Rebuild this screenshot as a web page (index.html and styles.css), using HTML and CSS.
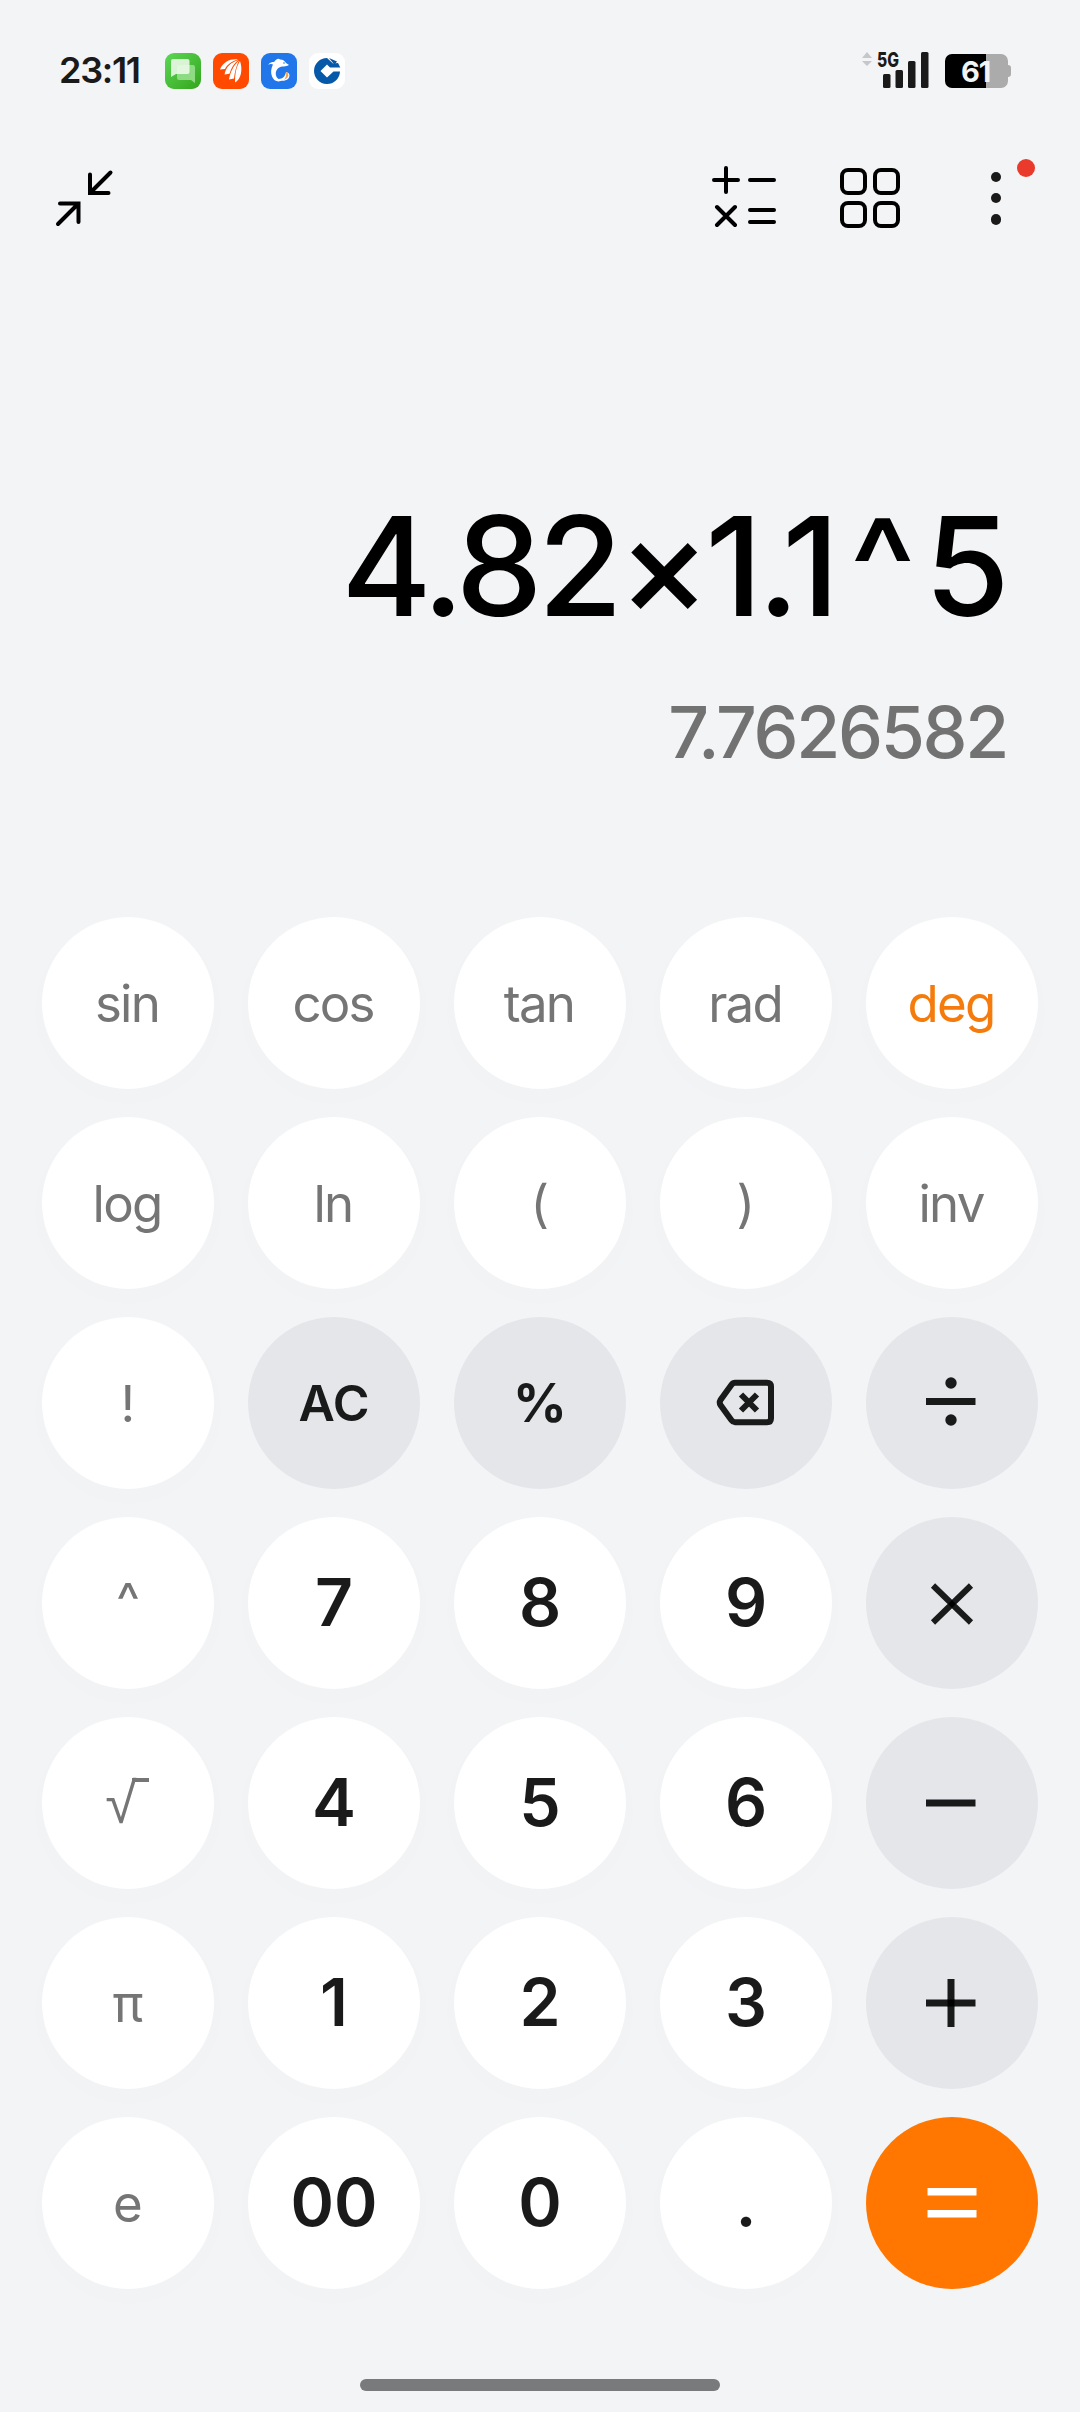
FILE: index.html
```html
<!DOCTYPE html>
<html>
<head>
    <meta charset="utf-8" />
    <title>Calculator</title>
    <link rel="stylesheet" href="styles.css">
</head>
<body>
    <div class="status_bar">
        <span class="time">23:11</span>
        <div class="notifications">
            <svg class="app" viewBox="0 0 36 36">
                <defs>
                    <linearGradient id="green" x1="0" y1="0" x2="1" y2="1">
                        <stop offset="0" stop-color="#5cd756" />
                        <stop offset="1" stop-color="#34a51c" />
                    </linearGradient>
                </defs>
                <rect width="36" height="36" rx="9" fill="url(#green)" />
                <path d="M14 12h14a2 2 0 0 1 2 2v16l-4-3H14a2 2 0 0 1-2-2V14a2 2 0 0 1 2-2z" fill="#8fdb83" />
                <path d="M8 6h14.500a2 2 0 0 1 2 2v11a2 2 0 0 1-2 2H11l-5 3V8a2 2 0 0 1 2-2z" fill="#f2fbef" opacity=".85" />
            </svg>
            <svg class="app" viewBox="0 0 36 36">
                <rect width="36" height="36" rx="9" fill="#ff4a00" />
                <path d="M25 6.500C18 5.500 10 8.500 7 16.500l5-.5C14 12 18 8.500 25 6.500z" fill="#fff" />
                <path d="M25.500 7C18 9.500 13 13.500 11.500 21.500l5-.8C18 15 21 10.500 25.500 7z" fill="#fff" />
                <path d="M26 7.500C20.500 12.500 17.500 18.500 16 26.500l5-1C21.500 19 23.500 12.500 26 7.500z" fill="#fff" />
                <path d="M27 8c-4 6.500-5 12.500-5 21.500 6-3 8-13 5-21.500z" fill="#fff" />
            </svg>
            <svg class="app" viewBox="0 0 36 36">
                <rect width="36" height="36" rx="9" fill="#2176ea" />
                <path d="M7 12c2-3 4-3 6-3 3-4 5-3.500 6-2.500 3 .2 5 1.500 6 3.500l3 2c-2 1.500-5 1.500-7 1.500-5 1-7 5-6 9 1 3.500 4 4.500 7 4-4 3.500-9 2-11-3-1.500-4-1-8 1-12-2-1-3-.500-5 .5z" fill="#fff" />
                <path d="M14 25c5 2.500 10 0 11-6 4 1 4.500 4 2 7-3 2.500-9 2.500-13-1z" fill="#fff" />
                <path d="M25 19c3 1 3 4 1 6l-3 2c2-3 2.500-5 2-8z" fill="#f3a24c" />
                <circle cx="23" cy="10" r=".8" fill="#2176ea" />
            </svg>
            <svg class="app" viewBox="0 0 36 36">
                <rect width="36" height="36" rx="9" fill="#fff" />
                <path d="M18 5a13 13 0 1 0 13 13.500h-6.500L18 24.500 11.500 18 18 11.500l3 3h10.300l-2.300-4.500-5 .5L18 5z" fill="#0659a9" />
                <path d="M20 5l8 3.500-2.500 3.200z" fill="#0659a9" />
            </svg>
        </div>
        <div class="status_right">
            <svg class="signal" viewBox="0 0 68 38">
                <path d="M0 8l5-6 5 6zM0 11l5 5 5-5z" fill="#c6c7c9" />
                <text class="network" x="15" y="17" textLength="22" lengthAdjust="spacingAndGlyphs">5G</text>
                <g fill="#1a1a1a">
                    <rect x="21" y="24" width="7.500" height="14" rx="1.500" />
                    <rect x="33.500" y="20" width="7.500" height="18" rx="1.500" />
                    <rect x="46" y="11" width="7.500" height="27" rx="1.500" />
                    <rect x="59" y="2" width="7.500" height="36" rx="1.500" />
                </g>
            </svg>
            <svg class="battery" viewBox="0 0 66 34">
                <path d="M41 0h15a7 7 0 0 1 7 7v4q3 0 3 3v6q0 3-3 3v4a7 7 0 0 1-7 7H41z" fill="#ababab" />
                <path d="M7 0h34v34H7a7 7 0 0 1-7-7V7a7 7 0 0 1 7-7z" fill="#000" />
                <text class="percent" x="16" y="28">61</text>
            </svg>
        </div>
    </div>

    <div class="toolbar">
        <svg class="collapse" viewBox="0 0 58 58">
            <path d="M55.500 3.500L35 24M35 5.500V24h18.500M3 55l20.500-20.500M5 34.500h18.500V53" />
        </svg>
        <svg class="convert" viewBox="0 0 68 64">
            <path d="M2 14h24M14 2v24M38 14h24M5 41l18 18M23 41L5 59M38 44h24M38 56h24" />
        </svg>
        <svg class="grid" viewBox="0 0 60 60">
            <rect x="2" y="2" width="23" height="23" rx="6" />
            <rect x="35" y="2" width="23" height="23" rx="6" />
            <rect x="2" y="35" width="23" height="23" rx="6" />
            <rect x="35" y="35" width="23" height="23" rx="6" />
        </svg>
        <div class="more">
            <i></i><i></i><i></i>
            <span class="badge"></span>
        </div>
    </div>

    <div class="display">
        <div class="expression">4.82×1.1<span class="pow">^</span>5</div>
        <div class="result">7.7626582</div>
    </div>

    <div class="keys">
        <button class="fn">sin</button>
        <button class="fn">cos</button>
        <button class="fn">tan</button>
        <button class="fn">rad</button>
        <button class="fn active">deg</button>

        <button class="fn">log</button>
        <button class="fn">ln</button>
        <button class="fn">(</button>
        <button class="fn">)</button>
        <button class="fn">inv</button>

        <button class="fn">!</button>
        <button class="op">AC</button>
        <button class="op percent_key">%</button>
        <button class="op">
            <svg viewBox="0 0 172 172">
                <path d="M75 65.800h32q4 0 4 4v31.400q0 4-4 4H75q-2 0-3.500-2L60.500 88q-1.500-2.500 0-5L71.500 67.800q1.500-2 3.500-2z" class="line" />
                <path d="M81 77.500l16 16M97 77.500l-16 16" class="line" />
            </svg>
        </button>
        <button class="op">
            <svg viewBox="0 0 172 172">
                <rect x="60" y="81" width="49.500" height="7" />
                <circle cx="85" cy="66" r="5.700" />
                <circle cx="85" cy="103" r="5.700" />
            </svg>
        </button>

        <button class="fn power_key">^</button>
        <button class="num">7</button>
        <button class="num">8</button>
        <button class="num">9</button>
        <button class="op">
            <svg viewBox="0 0 172 172">
                <path d="M67 68.500l38 37M105 68.500l-38 37" class="line" />
                <path d="M86 83l4 4-4 4-4-4z" class="cross" />
            </svg>
        </button>

        <button class="fn root">√<span class="root_bar"></span></button>
        <button class="num">4</button>
        <button class="num">5</button>
        <button class="num">6</button>
        <button class="op">
            <svg viewBox="0 0 172 172">
                <rect x="60" y="82.500" width="49.500" height="7" />
            </svg>
        </button>

        <button class="fn">π</button>
        <button class="num">1</button>
        <button class="num">2</button>
        <button class="num">3</button>
        <button class="op">
            <svg viewBox="0 0 172 172">
                <rect x="60" y="82.500" width="49.500" height="7" />
                <rect x="81.500" y="62" width="7" height="48" />
                <rect x="81.500" y="82.500" width="7" height="7" class="cross" />
            </svg>
        </button>

        <button class="fn">e</button>
        <button class="num">00</button>
        <button class="num">0</button>
        <button class="num">.</button>
        <button class="op equal">
            <svg viewBox="0 0 172 172">
                <rect x="61.500" y="71" width="49" height="7.500" />
                <rect x="61.500" y="93" width="49" height="7.500" />
            </svg>
        </button>
    </div>

    <div class="home_bar"></div>
</body>
</html>
```
FILE: styles.css
```css
* {
    box-sizing: border-box;
    font-family: Inter, Roboto, sans-serif;
}

body {
    margin: 0;
    width: 1080px;
    height: 2412px;
    background-color: #f3f4f6;
    display: flex;
    flex-direction: column;
    overflow: hidden;
}

svg {
    display: block;
    overflow: visible;
}

.status_bar {
    height: 142px;
    padding: 0 69px 0 59px;
    display: flex;
    align-items: center;
}

.time {
    width: 106px;
    padding-bottom: 3px;
    font-size: 36px;
    font-weight: 600;
    letter-spacing: -1.300px;
    color: #1a1a1a;
}

.notifications {
    display: flex;
    gap: 12px;
}

.app {
    width: 36px;
    height: 36px;
}

.status_right {
    margin-left: auto;
    display: flex;
    align-items: flex-end;
    gap: 15px;
    height: 34px;
}

.signal {
    width: 68px;
    height: 38px;
}

.network {
    font-size: 20.500px;
    font-weight: 800;
    fill: #1a1a1a;
}

.battery {
    width: 66px;
    height: 34px;
}

.percent {
    font-size: 29px;
    font-weight: 700;
    letter-spacing: -1px;
    fill: #f3f4f6;
}

/* Верхняя панель */
.toolbar {
    height: 112px;
    padding: 0 54px 0 55px;
    display: flex;
    align-items: center;
}

.collapse {
    width: 58px;
    height: 58px;
    margin-right: auto;
}

.convert {
    width: 68px;
    height: 64px;
    margin-right: 60px;
}

.grid {
    width: 60px;
    height: 60px;
    margin-right: 66px;
}

.collapse, .convert, .grid {
    fill: none;
    stroke: #000;
    stroke-width: 4;
    stroke-linecap: round;
}

.more {
    position: relative;
    width: 60px;
    height: 53px;
    display: flex;
    flex-direction: column;
    align-items: center;
    justify-content: space-between;
}

    .more i {
        width: 10.500px;
        height: 10.500px;
        border-radius: 50%;
        background-color: #1a1a1a;
    }

.badge {
    position: absolute;
    top: -13px;
    right: -9px;
    width: 18px;
    height: 18px;
    border-radius: 50%;
    background-color: #ea3a2c;
}

.display {
    height: 663px;
    padding: 229px 73px 0 0;
    text-align: right;
}

.expression {
    margin-right: 2px;
    font-size: 138px;
    line-height: 166px;
    font-weight: 500;
    letter-spacing: -4.900px;
    color: #000;
}

.pow {
    margin: 0 14px 0 15px;
}

.result {
    margin-top: 40px;
    font-size: 71.500px;
    line-height: 86px;
    font-weight: 500;
    letter-spacing: -2.300px;
    color: #727272;
}

/* Клавиши */
.keys {
    padding: 0 42px;
    display: grid;
    grid-template-columns: repeat(5, 172px);
    grid-auto-rows: 172px;
    gap: 28px 34px;
}

button {
    padding: 0;
    border: none;
    border-radius: 50%;
    background-color: #fff;
    box-shadow: 0 8px 40px rgba(0, 20, 30, 0.010);
    display: flex;
    align-items: center;
    justify-content: center;
}

.fn {
    padding-right: 2px;
    font-size: 51px;
    font-weight: 380;
    letter-spacing: -1.800px;
    color: #757575;
}

.active {
    color: #f57c0c;
}

.power_key {
    padding-bottom: 6px;
}

.root {
    font-family: "Liberation Sans", sans-serif;
    font-size: 57px;
    letter-spacing: 0;
}

.root_bar {
    width: 17px;
    height: 51px;
    margin-left: -5px;
    border-top: 4px solid #757575;
}

.num {
    padding-bottom: 2px;
    font-size: 66px;
    font-weight: 600;
    color: #1a1a1a;
}

.op {
    font-size: 50px;
    font-weight: 600;
    background-color: #e5e6ea;
    box-shadow: none;
    color: #191a1a;
}

    .op svg {
        width: 172px;
        height: 172px;
        fill: #191a1a;
    }

    .op .line {
        fill: none;
        stroke: #191a1a;
        stroke-width: 6;
    }

    .op .cross {
        fill: #000;
    }

.percent_key {
    font-size: 53px;
    font-weight: 750;
}

.equal {
    background-color: #ff7700;
}

    .equal svg {
        fill: #fff;
    }

.home_bar {
    width: 360px;
    height: 12px;
    margin: 90px auto 0;
    border-radius: 6px;
    background-color: #797a7c;
}
```
